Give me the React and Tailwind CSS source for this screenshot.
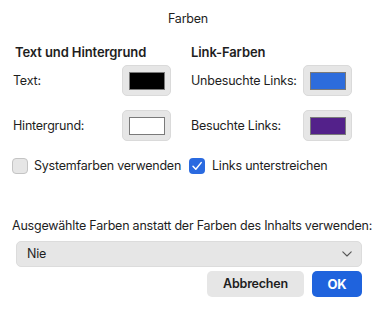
import React from "react";

function Swatch({ color }) {
  return (
    <div className="w-[49px] h-[31px] shrink-0 rounded-[5px] bg-[#e6e6e6] border border-[#dadada] flex items-center justify-center">
      <div className="w-[36px] h-[18px] border border-[#7a7a7a]" style={{ backgroundColor: color }} />
    </div>
  );
}

function Check({ checked }) {
  return checked ? (
    <div className="w-4 h-4 shrink-0 rounded-[4px] bg-[#2a6ae0] flex items-center justify-center">
      <svg width="12" height="12" viewBox="0 0 12 12" fill="none">
        <path d="M2 6.3 L4.8 9.2 L10.2 2.6" stroke="white" strokeWidth="1.5" strokeLinecap="round" strokeLinejoin="round" />
      </svg>
    </div>
  ) : (
    <div className="w-4 h-4 shrink-0 rounded-[4px] bg-[#e6e6e6] border border-[#c4c4c4]" />
  );
}

export default function App() {
  return (
    <div className="w-[376px] h-[311px] bg-white text-[12.5px] tracking-[-0.22px] leading-4 text-[#1e1e1e] font-['Inter',sans-serif] overflow-hidden whitespace-nowrap">
      <div className="pt-[11px] text-center">Farben</div>

      <div className="flex mt-[17px]">
        <div className="ml-[12px] w-[159px] flex flex-col">
          <div className="pl-[3px] font-semibold text-[13px] tracking-[-0.1px]">Text und Hintergrund</div>
          <div className="mt-[5px] flex items-center justify-between">
            <span className="pl-[1px]">Text:</span>
            <Swatch color="#000000" />
          </div>
          <div className="mt-[14px] flex items-center justify-between">
            <span className="pl-[1px]">Hintergrund:</span>
            <Swatch color="#ffffff" />
          </div>
          <div className="mt-[17px] flex items-center gap-[6px]">
            <Check checked={false} />
            <span>Systemfarben verwenden</span>
          </div>
        </div>
        <div className="ml-[18px] w-[163px] flex flex-col">
          <div className="pl-[2px] font-semibold text-[13px] tracking-[-0.1px]">Link-Farben</div>
          <div className="mt-[5px] flex items-center justify-between">
            <span className="pl-[2px]">Unbesuchte Links:</span>
            <Swatch color="#2d6cdc" />
          </div>
          <div className="mt-[14px] flex items-center justify-between">
            <span className="pl-[2px]">Besuchte Links:</span>
            <Swatch color="#53218a" />
          </div>
          <div className="mt-[17px] flex items-center gap-[7px]">
            <Check checked={true} />
            <span>Links unterstreichen</span>
          </div>
        </div>
      </div>

      <div className="mt-[44px] pl-[12px]">
        Ausgewählte Farben anstatt der Farben des Inhalts verwenden:
      </div>
      <div className="mt-[7px] ml-[16px] w-[346px] h-[26px] rounded-[5px] bg-[#e6e6e6] border border-[#dcdcdc] flex items-center justify-between pl-[10px] pr-[9px]">
        <span>Nie</span>
        <svg width="10" height="6" viewBox="0 0 10 6" fill="none">
          <path d="M0.8 0.8 L5 5 L9.2 0.8" stroke="#555" strokeWidth="1.1" strokeLinecap="round" strokeLinejoin="round" />
        </svg>
      </div>
      <div className="mt-[4px] flex justify-end gap-[8px] pr-[14px]">
        <button className="w-[97px] h-[26px] rounded-[5px] bg-[#e6e6e6] font-semibold text-[12.5px] text-[#1e1e1e]">
          Abbrechen
        </button>
        <button className="w-[50px] h-[26px] rounded-[5px] bg-[#1f63dd] font-bold text-[13px] text-white">
          OK
        </button>
      </div>
    </div>
  );
}
